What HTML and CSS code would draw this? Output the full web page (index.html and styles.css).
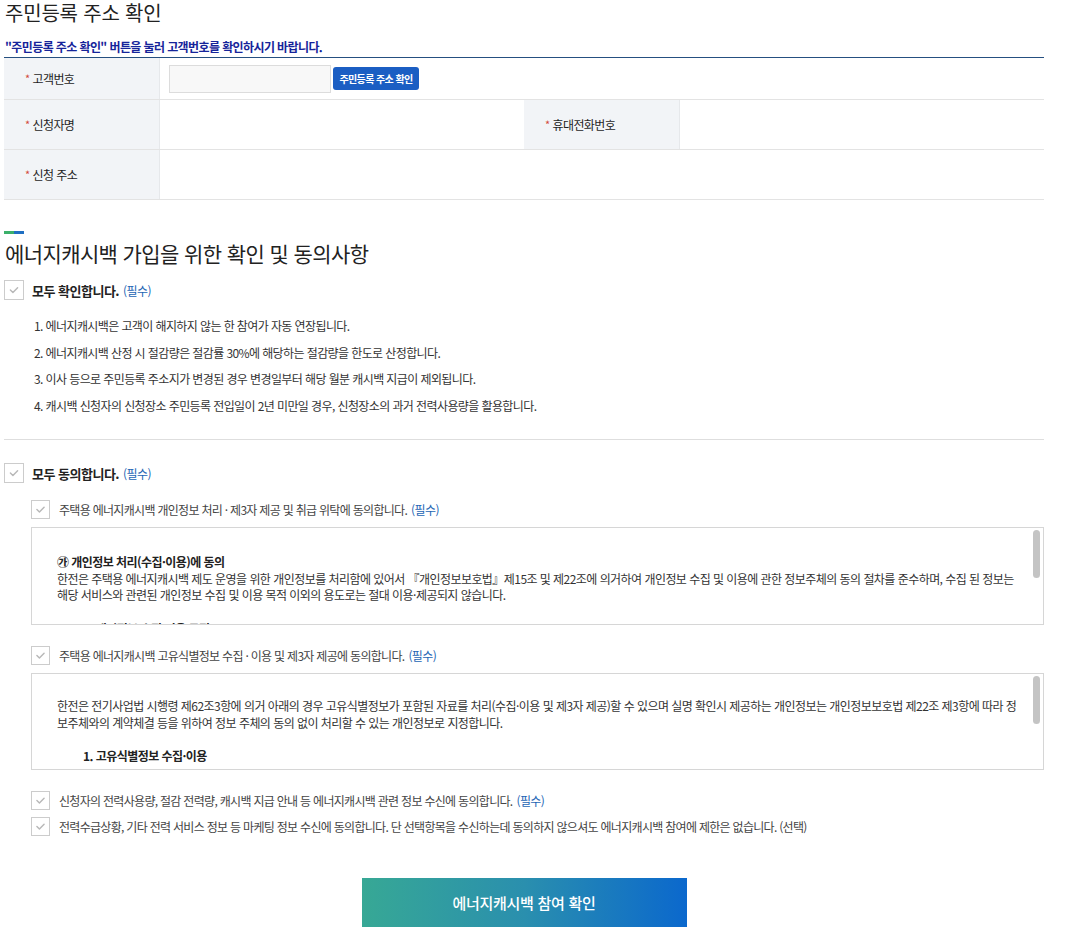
FILE: index.html
```html
<!DOCTYPE html>
<html lang="ko">
<head>
<meta charset="utf-8">
<title>주민등록 주소 확인</title>
<link rel="stylesheet" href="styles.css">
</head>
<body>
<div class="page">
  <h1 class="page-title">주민등록 주소 확인</h1>
  <p class="notice">"주민등록 주소 확인" 버튼을 눌러 고객번호를 확인하시기 바랍니다.</p>

  <div class="form-table">
    <div class="row row-first">
      <div class="th"><span class="req">*</span>고객번호</div>
      <div class="td td-wide">
        <input class="input" type="text">
        <button class="btn-small" type="button">주민등록 주소 확인</button>
      </div>
    </div>
    <div class="row">
      <div class="th"><span class="req">*</span>신청자명</div>
      <div class="td td-half"></div>
      <div class="th"><span class="req">*</span>휴대전화번호</div>
      <div class="td td-rest"></div>
    </div>
    <div class="row">
      <div class="th"><span class="req">*</span>신청 주소</div>
      <div class="td td-wide"></div>
    </div>
  </div>

  <div class="section-bar"><span class="bar-green"></span><span class="bar-blue"></span></div>
  <h2 class="section-title">에너지캐시백 가입을 위한 확인 및 동의사항</h2>

  <div class="check check-all first-all">
    <span class="box"><svg viewBox="0 0 20 20" class="tick"><polyline points="6,10 8.8,12.8 14,7.5"/></svg></span>
    <strong class="check-title">모두 확인합니다.</strong><span class="must">(필수)</span>
  </div>
  <ul class="notes">
    <li>1. 에너지캐시백은 고객이 해지하지 않는 한 참여가 자동 연장됩니다.</li>
    <li>2. 에너지캐시백 산정 시 절감량은 절감률 30%에 해당하는 절감량을 한도로 산정합니다.</li>
    <li>3. 이사 등으로 주민등록 주소지가 변경된 경우 변경일부터 해당 월분 캐시백 지급이 제외됩니다.</li>
    <li>4. 캐시백 신청자의 신청장소 주민등록 전입일이 2년 미만일 경우, 신청장소의 과거 전력사용량을 활용합니다.</li>
  </ul>
  <hr class="divider">

  <div class="check check-all second-all">
    <span class="box"><svg viewBox="0 0 20 20" class="tick"><polyline points="6,10 8.8,12.8 14,7.5"/></svg></span>
    <strong class="check-title">모두 동의합니다.</strong><span class="must">(필수)</span>
  </div>

  <div class="check check-sub sub-1">
    <span class="box box-sm"><svg viewBox="0 0 19 19" class="tick"><polyline points="5.5,9.5 8.3,12.3 13.5,7"/></svg></span>
    <span class="sub-text">주택용 에너지캐시백 개인정보 처리 · 제3자 제공 및 취급 위탁에 동의합니다.</span><span class="must">(필수)</span>
  </div>
  <div class="terms terms-1">
    <div class="terms-body">
      <p class="terms-head">㉮ 개인정보 처리(수집·이용)에 동의</p>
      <p>한전은 주택용 에너지캐시백 제도 운영을 위한 개인정보를 처리함에 있어서 『개인정보보호법』제15조 및 제22조에 의거하여 개인정보 수집 및 이용에 관한 정보주체의 동의 절차를 준수하며, 수집 된 정보는<br>해당 서비스와 관련된 개인정보 수집 및 이용 목적 이외의 용도로는 절대 이용·제공되지 않습니다.</p>
      <p class="terms-item">1. 개인정보 수집·이용 목적</p>
    </div>
    <span class="thumb"></span>
  </div>

  <div class="check check-sub sub-2">
    <span class="box box-sm"><svg viewBox="0 0 19 19" class="tick"><polyline points="5.5,9.5 8.3,12.3 13.5,7"/></svg></span>
    <span class="sub-text">주택용 에너지캐시백 고유식별정보 수집 · 이용 및 제3자 제공에 동의합니다.</span><span class="must">(필수)</span>
  </div>
  <div class="terms terms-2">
    <div class="terms-body">
      <p>한전은 전기사업법 시행령 제62조3항에 의거 아래의 경우 고유식별정보가 포함된 자료를 처리(수집·이용 및 제3자 제공)할 수 있으며 실명 확인시 제공하는 개인정보는 개인정보보호법 제22조 제3항에 따라 정<br>보주체와의 계약체결 등을 위하여 정보 주체의 동의 없이 처리할 수 있는 개인정보로 지정합니다.</p>
      <p class="terms-item">1. 고유식별정보 수집·이용</p>
    </div>
    <span class="thumb"></span>
  </div>

  <div class="check check-sub sub-3">
    <span class="box box-sm"><svg viewBox="0 0 19 19" class="tick"><polyline points="5.5,9.5 8.3,12.3 13.5,7"/></svg></span>
    <span class="sub-text">신청자의 전력사용량, 절감 전력량, 캐시백 지급 안내 등 에너지캐시백 관련 정보 수신에 동의합니다.</span><span class="must">(필수)</span>
  </div>
  <div class="check check-sub sub-4">
    <span class="box box-sm"><svg viewBox="0 0 19 19" class="tick"><polyline points="5.5,9.5 8.3,12.3 13.5,7"/></svg></span>
    <span class="sub-text">전력수급상황, 기타 전력 서비스 정보 등 마케팅 정보 수신에 동의합니다. 단 선택항목을 수신하는데 동의하지 않으셔도 에너지캐시백 참여에 제한은 없습니다. (선택)</span>
  </div>

  <button class="btn-submit" type="button">에너지캐시백 참여 확인</button>
</div>
</body>
</html>
```

FILE: styles.css
```css
* {
  box-sizing: border-box;
}

html, body {
  margin: 0;
  padding: 0;
  background: #fff;
}

body {
  font-family: "Noto Sans CJK KR", "Noto Sans", sans-serif;
  color: #333;
  font-size: 12px;
}

.page {
  width: 1040px;
  margin-left: 4px;
}

.page-title {
  margin: 0;
  padding-left: 1px;
  font-size: 20px;
  font-weight: 400;
  line-height: 26px;
  letter-spacing: -0.2px;
  color: #222;
}

.notice {
  margin: 13px 0 0;
  padding: 0 0 2px 1px;
  font-size: 12px;
  line-height: 16px;
  font-weight: 700;
  letter-spacing: -0.6px;
  color: #16249a;
}

/* form table */
.form-table {
  border-top: 1px solid #254f80;
}

.row {
  display: flex;
  height: 50px;
  border-bottom: 1px solid #e3e3e3;
}

.row-first {
  height: 42px;
}

.th {
  width: 156px;
  flex: none;
  display: flex;
  align-items: center;
  padding-left: 21px;
  background: #f2f4f7;
  border-right: 1px solid #e6e8eb;
  font-size: 12px;
  letter-spacing: -0.6px;
  color: #1e1e1e;
}

.req {
  color: #d24a3c;
  font-size: 11px;
  margin-right: 3px;
  position: relative;
  top: -1px;
}

.td {
  display: flex;
  align-items: center;
  padding-left: 9px;
}

.td-wide {
  flex: 1;
}

.td-half {
  width: 364px;
  flex: none;
}

.td-rest {
  flex: 1;
}

.input {
  width: 162px;
  height: 28px;
  margin: 0;
  border: 1px solid #dcdcdc;
  background: #f8f8f8;
  padding: 0 6px;
  font: inherit;
}

.btn-small {
  margin-left: 2px;
  height: 23px;
  width: 86px;
  padding: 0;
  border: none;
  border-radius: 3px;
  background: #1b5ec3;
  color: #fff;
  font-family: inherit;
  font-size: 10px;
  font-weight: 700;
  letter-spacing: -0.6px;
}

/* section */
.section-bar {
  display: flex;
  margin-top: 31px;
  height: 3px;
}

.bar-green {
  width: 10px;
  background: #3bb06a;
}

.bar-blue {
  width: 10px;
  background: #1f6fc2;
}

.section-title {
  margin: 5px 0 0;
  padding-left: 1px;
  font-size: 21px;
  line-height: 28px;
  font-weight: 400;
  letter-spacing: -0.6px;
  color: #222;
}

/* checks */
.check {
  display: flex;
  align-items: center;
}

.box {
  width: 20px;
  height: 20px;
  flex: none;
  border: 1px solid #cccccc;
  background: #fff;
  display: flex;
  align-items: center;
  justify-content: center;
}

.box-sm {
  width: 19px;
  height: 19px;
}

.tick {
  width: 100%;
  height: 100%;
  display: block;
}

.tick polyline {
  fill: none;
  stroke: #b8b8b8;
  stroke-width: 1.6;
  stroke-linecap: round;
  stroke-linejoin: round;
}

.check-all {
  height: 20px;
}

.first-all {
  margin-top: 13px;
}

.second-all {
  margin-top: 23px;
}

.check-title {
  margin-left: 8px;
  font-size: 13px;
  font-weight: 700;
  letter-spacing: -0.5px;
  color: #222;
}

.must {
  margin-left: 4px;
  font-size: 12px;
  letter-spacing: -0.6px;
  color: #2465b4;
}

.notes {
  list-style: none;
  margin: 13px 0 0;
  padding: 0 0 0 30px;
}

.notes li {
  line-height: 26.5px;
  font-size: 12px;
  letter-spacing: -0.6px;
  color: #333;
}

.divider {
  margin: 20px 0 0;
  border: none;
  border-top: 1px solid #dedede;
  height: 0;
}

.check-sub {
  margin-left: 27px;
  height: 19px;
}

.sub-1 { margin-top: 17px; }
.sub-2 { margin-top: 21px; }
.sub-3 { margin-top: 21px; }
.sub-4 { margin-top: 7px; }

.sub-text {
  margin-left: 9px;
  font-size: 12px;
  letter-spacing: -0.7px;
  color: #444;
}

/* terms boxes */
.terms {
  position: relative;
  margin: 8px 0 0 27px;
  height: 98px;
  border: 1px solid #d6d6d6;
}

.terms-2 {
  height: 97px;
}

.terms-body {
  height: 100%;
  overflow: hidden;
  padding: 26px 30px 0 25px;
  font-size: 12px;
  line-height: 16.5px;
  letter-spacing: -0.55px;
  color: #333;
}

.terms-2 .terms-body {
  padding-top: 24px;
}

.terms p {
  margin: 0;
  white-space: nowrap;
}

.terms-head {
  font-weight: 700;
  color: #222;
}

.terms-item {
  margin-top: 17px !important;
  padding-left: 26px;
  font-weight: 700;
  color: #222;
}

.thumb {
  position: absolute;
  top: 2px;
  right: 3px;
  width: 7px;
  height: 48px;
  border-radius: 4px;
  background: #c4c4c4;
}

/* submit */
.btn-submit {
  display: block;
  margin: 42px auto 0;
  width: 325px;
  height: 49px;
  border: none;
  padding: 0;
  background: linear-gradient(90deg, #37a895 0%, #2a8fae 50%, #0b68cd 100%);
  color: #fff;
  font-family: inherit;
  font-size: 15px;
  font-weight: 500;
  letter-spacing: -0.3px;
}
```
